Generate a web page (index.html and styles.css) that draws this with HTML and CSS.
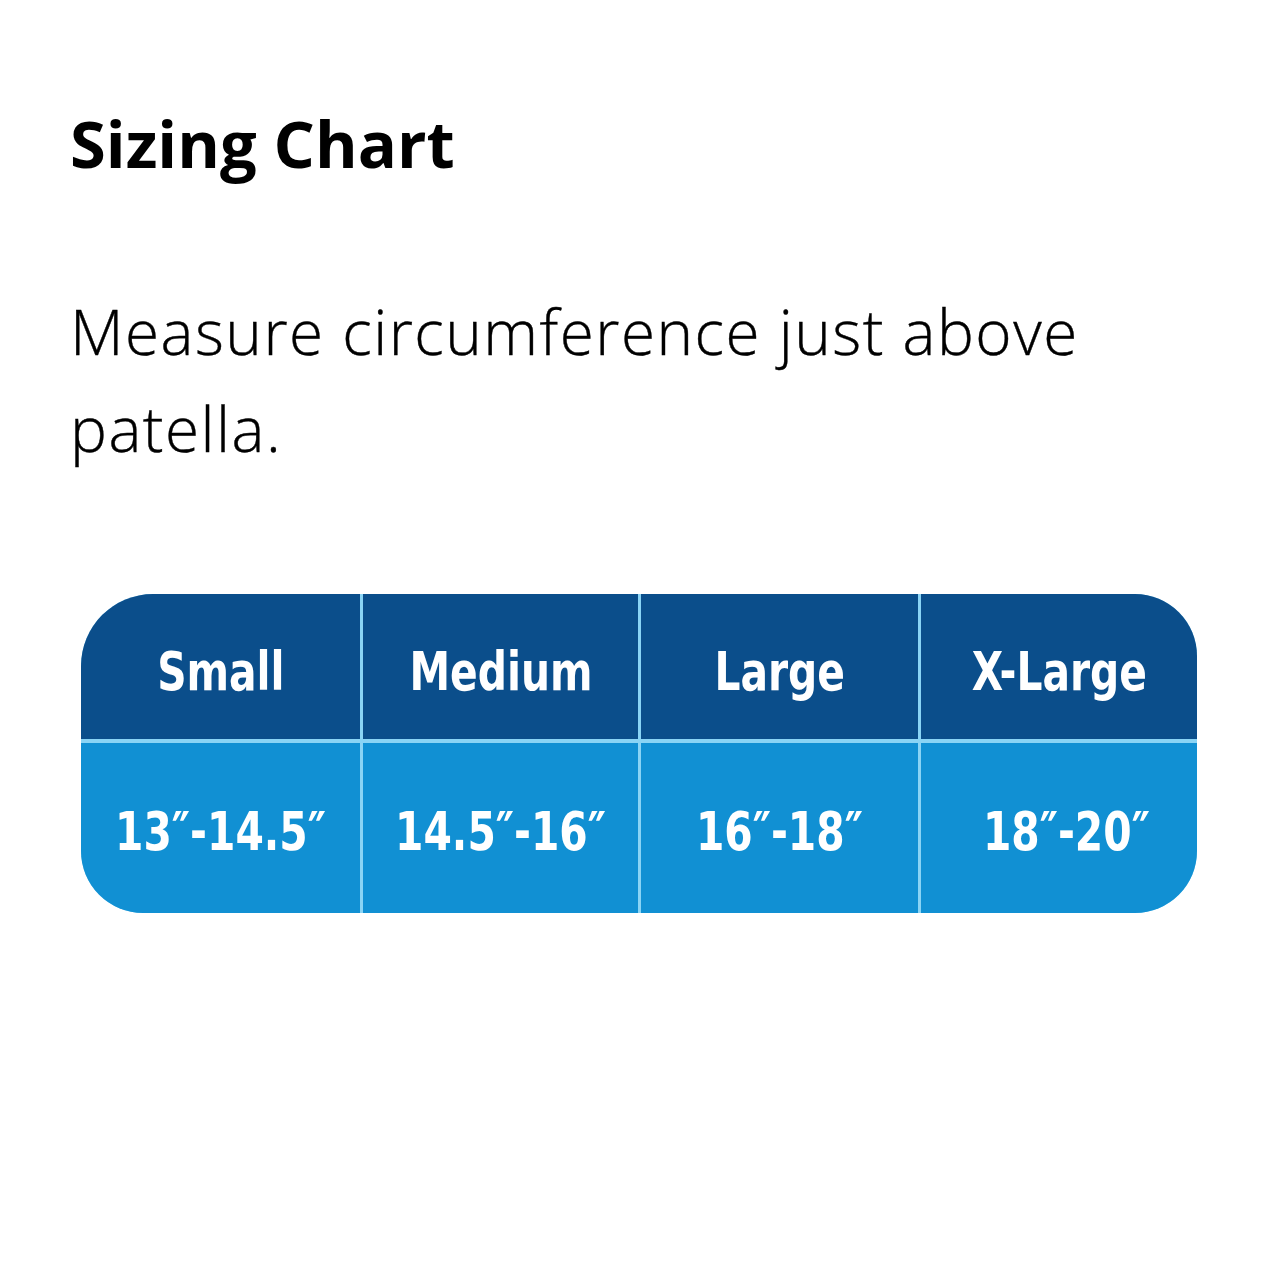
FILE: index.html
```html
<!DOCTYPE html>
<html lang="en">
<head>
<meta charset="utf-8">
<title>Sizing Chart</title>
<link rel="stylesheet" href="styles.css">
</head>
<body>
<main class="page">
  <h1 class="title">Sizing Chart</h1>
  <p class="note">Measure circumference just above patella.</p>
  <div class="chart">
    <div class="cell head"><span class="label">Small</span></div>
    <div class="cell head"><span class="label">Medium</span></div>
    <div class="cell head"><span class="label">Large</span></div>
    <div class="cell head"><span class="label">X-Large</span></div>
    <div class="cell body"><span class="label">13″-14.5″</span></div>
    <div class="cell body"><span class="label">14.5″-16″</span></div>
    <div class="cell body"><span class="label">16″-18″</span></div>
    <div class="cell body shift"><span class="label">18″-20″</span></div>
  </div>
</main>
</body>
</html>
```
FILE: styles.css
```css
html, body {
  margin: 0;
  padding: 0;
  background: #ffffff;
}
.page {
  padding: 98px 0 0 70px;
  width: 1210px;
}
.title {
  margin: 0;
  font-family: "Open Sans", "DejaVu Sans", sans-serif;
  font-weight: 700;
  font-size: 65px;
  line-height: 90px;
  color: #000000;
}
.note {
  margin: 95px 0 0 0;
  width: 1100px;
  font-family: "Open Sans", "DejaVu Sans", sans-serif;
  font-weight: 300;
  font-size: 62px;
  line-height: 97px;
  letter-spacing: 1.5px;
  color: #000000;
  -webkit-text-stroke: 0.4px #000000;
}
.chart {
  margin: 117px 0 0 11px;
  width: 1116px;
  display: grid;
  grid-template-columns: 279px 275px 277px 276px;
  grid-template-rows: 145px 170px;
  column-gap: 3px;
  row-gap: 4px;
  background: #8ad4f5;
  border-radius: 72px 62px 62px 62px;
  overflow: hidden;
}
.cell {
  display: flex;
  align-items: center;
  justify-content: center;
  font-family: "DejaVu Sans Condensed", "DejaVu Sans", sans-serif;
  font-weight: 700;
  font-size: 54px;
  color: #ffffff;
  box-sizing: border-box;
}
.label {
  display: inline-block;
  transform: scaleX(0.84);
  white-space: nowrap;
}
.head {
  background: #0b4e8b;
  padding-top: 10px;
}
.body {
  background: #1190d3;
  padding-top: 6px;
}
.shift {
  padding-left: 14px;
}
```
